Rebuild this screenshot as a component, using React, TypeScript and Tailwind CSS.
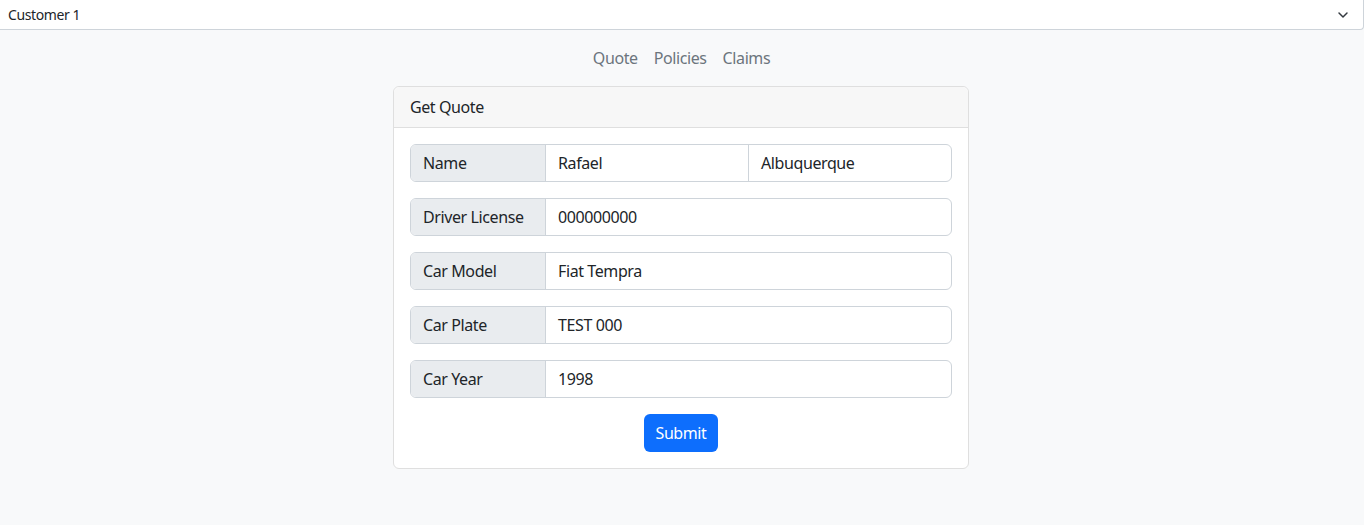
import React from 'react';
import { ChevronDown } from 'lucide-react';

const rows = [
  { label: 'Driver License', value: '000000000' },
  { label: 'Car Model', value: 'Fiat Tempra' },
  { label: 'Car Plate', value: 'TEST 000' },
  { label: 'Car Year', value: '1998' },
];

const App: React.FC = () => {
  return (
    <div
      className="min-h-screen bg-[#f8f9fa] tracking-[-0.025em] text-[#212529]"
      style={{ fontFamily: '"Segoe UI", "Noto Sans", sans-serif' }}
    >
      {/* Customer select */}
      <div className="flex h-[30px] items-center justify-between rounded-br-[4px] border-b border-r border-[#ced4da] bg-white pl-2 pr-3 text-sm">
        <span>Customer 1</span>
        <ChevronDown size={16} strokeWidth={2.2} className="text-[#343a40]" />
      </div>

      {/* Nav */}
      <div className="mt-2 flex justify-center pr-px">
        {['Quote', 'Policies', 'Claims'].map((l) => (
          <a key={l} className="px-2 py-2 text-base leading-6 text-[#6c757d]">
            {l}
          </a>
        ))}
      </div>

      {/* Card */}
      <div className="mt-2 flex justify-center pr-[2px]">
        <div className="w-[576px] rounded-[6px] border border-[#dfdfdf] bg-white">
          <div className="h-[41px] rounded-t-[6px] border-b border-[#dfdfdf] bg-[#f7f7f7] px-4 py-2 leading-6">
            Get Quote
          </div>
          <div className="flex flex-col gap-4 p-4">
            <div className="flex h-[38px] rounded-[6px] border border-[#ced4da]">
              <div className="flex w-[135px] items-center rounded-l-[5px] border-r border-[#ced4da] bg-[#e9ecef] px-3">
                Name
              </div>
              <div className="flex flex-1 items-center border-r border-[#ced4da] px-3">Rafael</div>
              <div className="flex flex-1 items-center px-3">Albuquerque</div>
            </div>
            {rows.map((r) => (
              <div key={r.label} className="flex h-[38px] rounded-[6px] border border-[#ced4da]">
                <div className="flex w-[135px] items-center rounded-l-[5px] border-r border-[#ced4da] bg-[#e9ecef] px-3">
                  {r.label}
                </div>
                <div className="flex flex-1 items-center px-3">{r.value}</div>
              </div>
            ))}
            <div className="flex justify-center">
              <button className="h-[38px] rounded-[6px] bg-[#0d6efd] px-3 text-white">Submit</button>
            </div>
          </div>
        </div>
      </div>
    </div>
  );
};

export default App;
